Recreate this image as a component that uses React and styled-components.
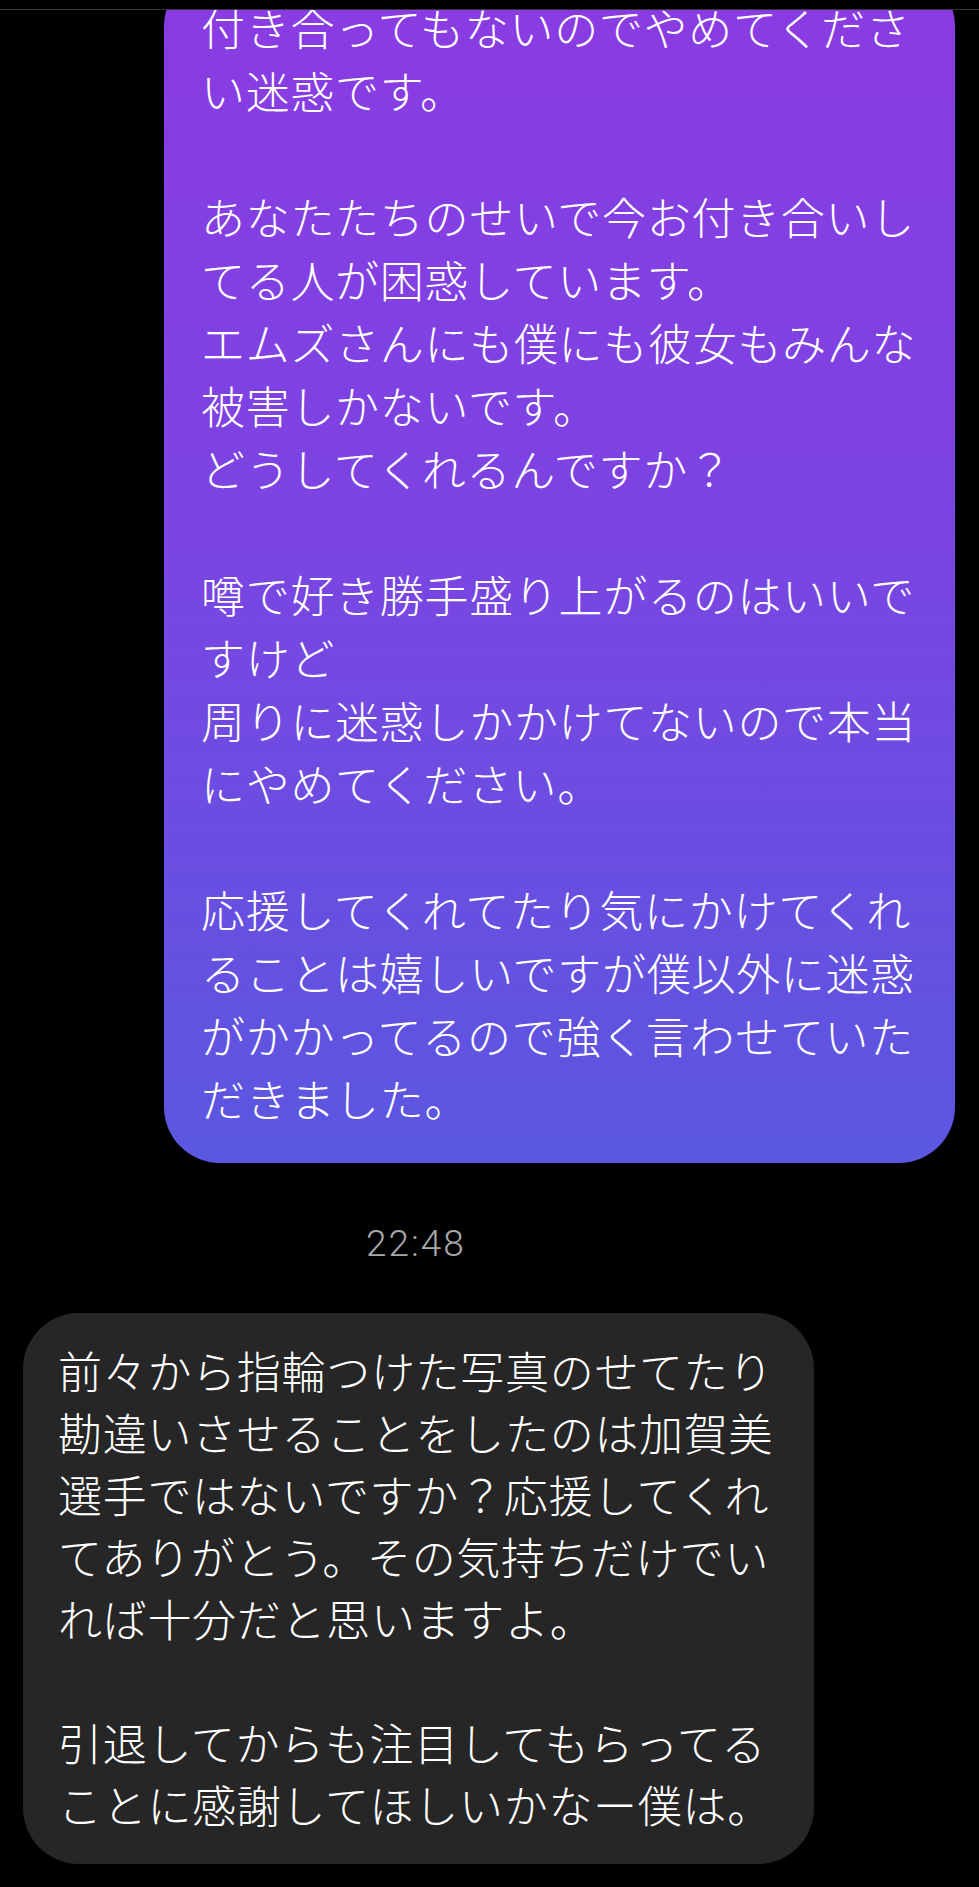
import React from 'react';
import styled, { createGlobalStyle } from 'styled-components';

const GlobalStyle = createGlobalStyle`
  html, body {
    margin: 0;
    padding: 0;
    background: #000;
  }
  body {
    font-family: "Noto Sans CJK JP", "Noto Sans", sans-serif;
  }
`;

const Screen = styled.div`
  width: 979px;
  height: 1887px;
  background: #000;
  display: flex;
  flex-direction: column;
  overflow: hidden;
`;

const TopBar = styled.div`
  height: 9px;
  flex-shrink: 0;
  border-bottom: 1px solid #363636;
  background: #000;
  position: relative;
  z-index: 1;
`;

const Thread = styled.div`
  flex: 1;
  overflow: hidden;
  display: flex;
  flex-direction: column;
`;

const Row = styled.div`
  display: flex;
  justify-content: ${(p) => (p.$mine ? 'flex-end' : 'flex-start')};
  padding: ${(p) => (p.$mine ? '0 24px 0 0' : '0 0 0 23px')};
  margin-top: ${(p) => p.$top || 0}px;
`;

const Bubble = styled.div`
  width: 791px;
  box-sizing: border-box;
  border-radius: 56px;
  padding: ${(p) => p.$pad};
  color: #fff;
  font-size: 44px;
  letter-spacing: 0.7px;
  line-height: ${(p) => p.$lh}px;
  font-weight: 300;
  white-space: pre-wrap;
  word-break: break-all;
  background: ${(p) =>
    p.$mine
      ? 'linear-gradient(180deg, #8a3be2 0%, #7c44e2 45%, #5a57e0 100%)'
      : '#262626'};
`;

const Stamp = styled.div`
  margin-top: 58px;
  padding-left: 366px;
  font-family: Roboto, "Noto Sans", sans-serif;
  font-size: 37px;
  font-weight: 300;
  line-height: 46px;
  color: #a8a8a8;
  letter-spacing: 2px;
`;

const mine = `付き合ってもないのでやめてください迷惑です。

あなたたちのせいで今お付き合いしてる人が困惑しています。
エムズさんにも僕にも彼女もみんな被害しかないです。
どうしてくれるんですか？

噂で好き勝手盛り上がるのはいいですけど
周りに迷惑しかかけてないので本当にやめてください。

応援してくれてたり気にかけてくれることは嬉しいですが僕以外に迷惑がかかってるので強く言わせていただきました。`;

const theirs = `前々から指輪つけた写真のせてたり勘違いさせることをしたのは加賀美選手ではないですか？応援してくれてありがとう。その気持ちだけでいれば十分だと思いますよ。

引退してからも注目してもらってることに感謝してほしいかなー僕は。`;

export default function App() {
  return (
    <Screen>
      <GlobalStyle />
      <TopBar />
      <Thread>
        <Row $mine $top={-40}>
          <Bubble $mine $lh={63} $pad="26px 30px 33px 37px">
            {mine}
          </Bubble>
        </Row>
        <Stamp>22:48</Stamp>
        <Row $top={46}>
          <Bubble $lh={62} $pad="26px 30px 29px 35px">
            {theirs}
          </Bubble>
        </Row>
      </Thread>
    </Screen>
  );
}
